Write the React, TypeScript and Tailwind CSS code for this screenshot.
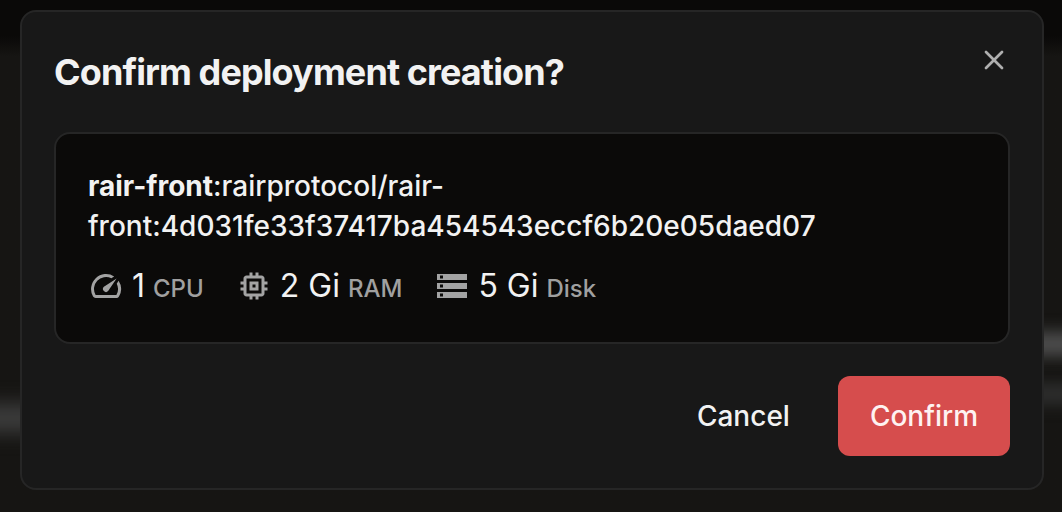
import type { ReactNode } from "react";
import { X } from "lucide-react";
import { MdMemory, MdSpeed, MdStorage } from "react-icons/md";

type ResourceProps = { icon: ReactNode; value: string; label: string };

function Resource({ icon, value, label }: ResourceProps) {
  return (
    <li className="flex items-center gap-2">
      <span className="text-4xl text-[#a3a3a3]">{icon}</span>
      <span className="flex items-baseline gap-2">
        <span className="text-[32px] leading-12">{value}</span>
        <span className="text-2xl leading-8 font-medium text-[#a0a0a0]">{label}</span>
      </span>
    </li>
  );
}

function Backdrop() {
  return (
    <div aria-hidden="true" className="absolute inset-0 -z-10 overflow-hidden bg-linear-to-b from-[#0a0908] from-7% to-[#161513] to-11%">
      <div className="absolute -left-10 top-[404px] h-7 w-32 bg-[#3e3e3e] blur-[10px]" />
      <div className="absolute -right-10 top-[332px] h-6 w-32 bg-[#4e4e4e] blur-[8px]" />
      <div className="absolute -right-10 top-[384px] h-5 w-32 bg-[#2f2f2f] blur-[8px]" />
    </div>
  );
}

export default function App() {
  return (
    <main className="relative isolate flex min-h-screen justify-center pt-2.5 pr-[18px] pb-5 pl-5 font-['Inter',sans-serif] text-[#f2f2f2]">
      <Backdrop />
      <section
        role="dialog"
        aria-modal="true"
        aria-labelledby="dialog-title"
        className="flex w-full max-w-5xl flex-col gap-8 self-start rounded-2xl border-2 border-[#262626] bg-[#181818] p-8"
      >
        <header className="flex items-start justify-between">
          <h2 id="dialog-title" className="text-4xl leading-14 font-bold tracking-tight">
            Confirm deployment creation?
          </h2>
          <button type="button" aria-label="Close" className="text-[#b0b0b0]">
            <X size={32} />
          </button>
        </header>

        <div className="rounded-2xl border-2 border-[#262626] bg-[#0b0a09] p-8">
          <p className="text-[28px] leading-10 font-medium">
            <b className="font-bold">rair-front</b>:rairprotocol/rair-
            <wbr />
            front:4d031fe33f37417ba454543eccf6b20e05daed07
          </p>
          <ul className="mt-4 flex gap-8">
            <Resource icon={<MdSpeed />} value="1" label="CPU" />
            <Resource icon={<MdMemory />} value="2 Gi" label="RAM" />
            <Resource icon={<MdStorage />} value="5 Gi" label="Disk" />
          </ul>
        </div>

        <footer className="flex justify-end gap-4 text-[28px] leading-10 font-medium">
          <button type="button" className="rounded-xl px-8 py-5">
            Cancel
          </button>
          <button type="button" className="rounded-xl bg-[#d64d4d] px-8 py-5 text-[#fef2f2]">
            Confirm
          </button>
        </footer>
      </section>
    </main>
  );
}
